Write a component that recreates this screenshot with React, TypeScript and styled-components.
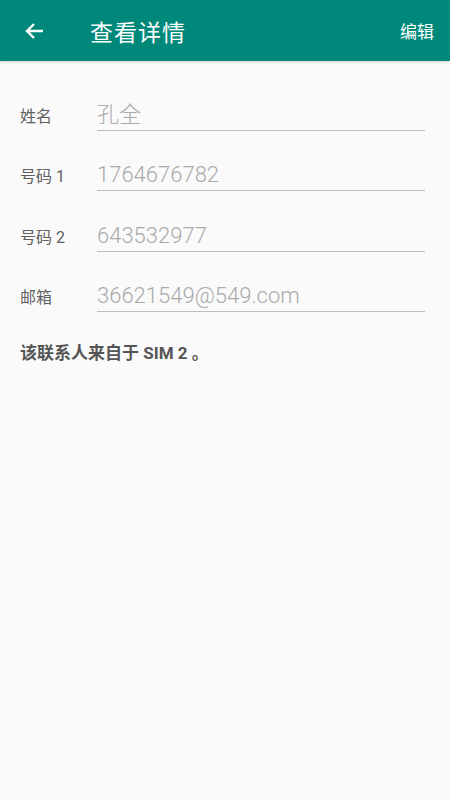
import React from 'react';
import styled, { createGlobalStyle } from 'styled-components';

const GlobalStyle = createGlobalStyle`
  html, body {
    margin: 0;
    padding: 0;
    background: #fafafa;
  }
  body {
    font-family: Roboto, "Noto Sans CJK SC", "Noto Sans", sans-serif;
  }
`;

type Field = {
  label: string;
  value: string;
};

const fields: Field[] = [
  { label: '姓名', value: '孔全' },
  { label: '号码 1', value: '1764676782' },
  { label: '号码 2', value: '643532977' },
  { label: '邮箱', value: '36621549@549.com' },
];

const App: React.FC = () => {
  return (
    <Page>
      <GlobalStyle />
      <Toolbar>
        <BackButton>
          <svg width="24" height="24" viewBox="0 0 24 24">
            <path d="M20 12H4.5M11 5l-7 7 7 7" stroke="#fff" strokeWidth="2.4" fill="none" />
          </svg>
        </BackButton>
        <Title>查看详情</Title>
        <EditButton>编辑</EditButton>
      </Toolbar>
      <Form>
        {fields.map((f) => (
          <Row key={f.label}>
            <Label>{f.label}</Label>
            <Value>{f.value}</Value>
          </Row>
        ))}
        <Note>该联系人来自于 SIM 2 。</Note>
      </Form>
    </Page>
  );
};

export default App;

const Page = styled.div`
  width: 450px;
  min-height: 800px;
  background: #fafafa;
`;

const Toolbar = styled.header`
  height: 61px;
  background: #00897b;
  display: flex;
  align-items: center;
  padding: 0 16px 0 23px;
  box-shadow: 0 1px 3px rgba(0, 0, 0, 0.18);
`;

const BackButton = styled.div`
  width: 24px;
  height: 24px;
  display: flex;
  align-items: center;
  justify-content: center;
  margin-top: 1px;
`;

const Title = styled.h1`
  margin: 0 0 0 43px;
  flex: 1;
  font-size: 23px;
  font-weight: 400;
  color: #fff;
  letter-spacing: 1px;
`;

const EditButton = styled.span`
  font-size: 17px;
  color: #fff;
`;

const Form = styled.div`
  padding: 9px 25px 0 20px;
`;

const Row = styled.div`
  display: flex;
  align-items: flex-end;
  height: 60.5px;
`;

const Label = styled.div`
  width: 77px;
  font-size: 16px;
  color: #606060;
  padding-bottom: 4px;
`;

const Value = styled.div`
  flex: 1;
  font-size: 22px;
  font-weight: 300;
  color: #aaa;
  padding-bottom: 1px;
  border-bottom: 1.5px solid #bdbdbd;
  line-height: 28px;
`;

const Note = styled.p`
  margin: 27px 0 0;
  font-size: 17px;
  font-weight: 700;
  color: #555;
`;
